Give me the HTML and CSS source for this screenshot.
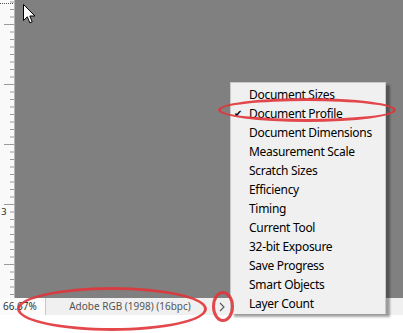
FILE: index.html
```html
<!DOCTYPE html>
<html>
<head>
<meta charset="utf-8">
<link rel="stylesheet" href="styles.css">
</head>
<body>
<div class="app">
  <div class="ruler">
    <svg class="ruler-svg" width="15" height="298" viewBox="0 0 15 298">
      <defs>
        <pattern id="ticks" x="0" y="24" width="15" height="60" patternUnits="userSpaceOnUse">
          <line x1="4" y1="0.5" x2="14" y2="0.5" stroke="#9a9a9a" stroke-width="1"/>
          <line x1="10" y1="8" x2="14" y2="8" stroke="#9a9a9a" stroke-width="1"/>
          <line x1="10" y1="15.5" x2="14" y2="15.5" stroke="#9a9a9a" stroke-width="1"/>
          <line x1="10" y1="23" x2="14" y2="23" stroke="#9a9a9a" stroke-width="1"/>
          <line x1="10" y1="30.5" x2="14" y2="30.5" stroke="#9a9a9a" stroke-width="1"/>
          <line x1="10" y1="38" x2="14" y2="38" stroke="#9a9a9a" stroke-width="1"/>
          <line x1="10" y1="45.5" x2="14" y2="45.5" stroke="#9a9a9a" stroke-width="1"/>
          <line x1="10" y1="53" x2="14" y2="53" stroke="#9a9a9a" stroke-width="1"/>
        </pattern>
      </defs>
      <rect x="0" y="0" width="15" height="298" fill="url(#ticks)"/>
      <line x1="0" y1="3.5" x2="14" y2="3.5" stroke="#555" stroke-width="1" stroke-dasharray="1 1"/>
      <line x1="14.5" y1="0" x2="14.5" y2="298" stroke="#b5b5b5" stroke-width="1"/>
      <text x="1" y="215" class="ruler-num">3</text>
    </svg>
  </div>
  <div class="canvas"></div>
  <div class="status">
    <div class="zoom-field">66.67%</div>
    <div class="info-field">Adobe RGB (1998) (16bpc)</div>
    <div class="arrow-field">
      <svg width="6" height="10" viewBox="0 0 6 10"><path d="M1 1 L5 5 L1 9" fill="none" stroke="#555" stroke-width="1.1"/></svg>
    </div>
  </div>
</div>

<svg class="cursor" width="14" height="22" viewBox="0 0 14 22">
  <path d="M0.5 0.5 L0.5 16.5 L4.3 12.8 L6.8 18.8 L9.2 17.8 L6.8 12 L12 12 Z" fill="#fff" stroke="#000" stroke-width="1" stroke-linejoin="miter"/>
</svg>

<div class="menu">
  <div class="item">Document Sizes</div>
  <div class="item checked">Document Profile</div>
  <div class="item">Document Dimensions</div>
  <div class="item">Measurement Scale</div>
  <div class="item">Scratch Sizes</div>
  <div class="item">Efficiency</div>
  <div class="item">Timing</div>
  <div class="item">Current Tool</div>
  <div class="item">32-bit Exposure</div>
  <div class="item">Save Progress</div>
  <div class="item">Smart Objects</div>
  <div class="item">Layer Count</div>
</div>

<div class="ring ring-profile"></div>
<div class="ring ring-status"></div>
<div class="ring ring-arrow"></div>
</body>
</html>
```

FILE: styles.css
```css
html, body {
  margin: 0;
  padding: 0;
  background: #ffffff;
  width: 403px;
  height: 333px;
  overflow: hidden;
  font-family: "Noto Sans", "Open Sans", sans-serif;
}

.app {
  display: grid;
  grid-template-columns: 15px 1fr;
  grid-template-rows: 298px 17px;
  width: 403px;
}

.ruler {
  background: #f9f9f9;
  height: 298px;
}

.ruler-svg {
  display: block;
}

.ruler-num {
  font-family: "DejaVu Sans", sans-serif;
  font-size: 9px;
  fill: #333;
}

.canvas {
  background: #808080;
}

.status {
  grid-column: 1 / 3;
  display: flex;
  align-items: stretch;
  background: #f0f0f0;
  font-size: 10px;
  color: #333;
  line-height: 17px;
}

.zoom-field {
  width: 42px;
  padding-left: 3px;
  background: #fbfbfb;
  border-right: 1px solid #c8c8c8;
}

.info-field {
  width: 168px;
  text-align: center;
  color: #555;
}

.arrow-field {
  width: 16px;
  display: flex;
  align-items: center;
  justify-content: center;
  padding-top: 1px;
}

.arrow-field svg {
  display: block;
}

.cursor {
  position: absolute;
  left: 23px;
  top: 4px;
}

.menu {
  position: absolute;
  left: 230px;
  top: 82px;
  padding-top: 2px;
  box-sizing: border-box;
  width: 156px;
  height: 232px;
  background: #f0f0f0;
  border: 1px solid #c9c9c9;
  border-bottom: none;
  box-shadow: 4px 3px 2px rgba(0, 0, 0, 0.35);
}

.item {
  height: 19px;
  line-height: 19px;
  padding-left: 18px;
  font-size: 12px;
  letter-spacing: -0.3px;
  color: #000;
  position: relative;
  white-space: nowrap;
}

.item.checked::before {
  content: "✔";
  position: absolute;
  left: 3px;
  top: 0;
  font-size: 10px;
  letter-spacing: 0;
  font-family: "DejaVu Sans", sans-serif;
}

.ring {
  position: absolute;
  border: 3px solid #e0353a;
  border-radius: 50%;
  box-sizing: border-box;
  filter: blur(0.7px);
  opacity: 0.9;
}

.ring-profile {
  left: 218px;
  top: 98px;
  width: 178px;
  height: 24px;
}

.ring-status {
  left: 17px;
  top: 287px;
  width: 190px;
  height: 44px;
}

.ring-arrow {
  left: 212px;
  top: 291px;
  width: 22px;
  height: 31px;
}
```
